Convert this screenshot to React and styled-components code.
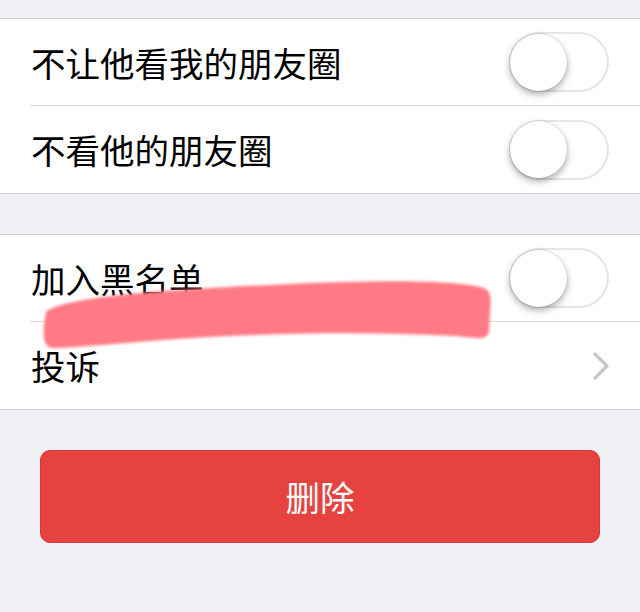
import React from 'react';
import styled, { createGlobalStyle } from 'styled-components';

const Global = createGlobalStyle`
  html, body {
    margin: 0;
    padding: 0;
    background: #efeff4;
  }
  * { box-sizing: border-box; }
`;

const Page = styled.div`
  position: relative;
  width: 640px;
  height: 612px;
  overflow: hidden;
  padding-top: 18px;
  background: #efeff4;
  font-family: 'Noto Sans CJK SC', 'Noto Sans', sans-serif;
`;

const Group = styled.div`
  background: #fff;
  border-top: 1px solid #d2d1d6;
  border-bottom: 1px solid #d2d1d6;
  margin-bottom: ${({ gap }) => gap}px;
`;

const Row = styled.div`
  height: 87px;
  margin-left: 30px;
  padding-right: 31px;
  display: flex;
  align-items: center;
  justify-content: space-between;
  border-bottom: ${({ last }) => (last ? 'none' : '1px solid #dcdbe0')};
  font-size: 34.5px;
  color: #000;
  line-height: 1;
`;

const Label = styled.span`
  padding-left: 1px;
`;

const Switch = styled.div`
  width: 100px;
  height: 60px;
  border-radius: 30px;
  border: 2px solid #e5e5ea;
  background: #fff;
  display: flex;
  align-items: center;
`;

const Knob = styled.div`
  width: 57px;
  height: 57px;
  margin-left: -1px;
  border-radius: 50%;
  background: #fff;
  box-shadow: 0 0 0 0.5px rgba(0, 0, 0, 0.12), 0 3px 6px rgba(0, 0, 0, 0.28),
    0 4px 12px rgba(0, 0, 0, 0.08);
`;

const Chevron = styled.svg`
  width: 18px;
  height: 28px;
  margin-right: -1px;
`;

const ButtonWrap = styled.div`
  padding: 0 40px;
`;

const DeleteButton = styled.button`
  width: 100%;
  height: 93px;
  border: 1px solid #d43a37;
  border-radius: 10px;
  background: #e64340;
  color: #fff;
  font-family: 'Noto Sans CJK SC', 'Noto Sans', sans-serif;
  font-size: 34.5px;
  line-height: 1;
  display: flex;
  align-items: center;
  justify-content: center;
`;

// hand-drawn marker stroke laid over the rows
const Scribble = styled.svg`
  position: absolute;
  left: 0;
  top: 0;
  width: 640px;
  height: 612px;
  pointer-events: none;
`;

const Toggle = () => (
  <Switch>
    <Knob />
  </Switch>
);

export default function App() {
  return (
    <Page>
      <Global />
      <Group gap={40}>
        <Row>
          <Label>不让他看我的朋友圈</Label>
          <Toggle />
        </Row>
        <Row last>
          <Label>不看他的朋友圈</Label>
          <Toggle />
        </Row>
      </Group>
      <Group gap={40}>
        <Row>
          <Label>加入黑名单</Label>
          <Toggle />
        </Row>
        <Row last>
          <Label>投诉</Label>
          <Chevron viewBox="0 0 18 28">
            <path d="M3 2 L15 14 L3 26" fill="none" stroke="#c7c7cc" strokeWidth="3.2" strokeLinecap="round" strokeLinejoin="round" />
          </Chevron>
        </Row>
      </Group>
      <ButtonWrap>
        <DeleteButton>删除</DeleteButton>
      </ButtonWrap>
      <Scribble viewBox="0 0 640 612">
        <defs>
          <filter id="soft" x="-10%" y="-50%" width="120%" height="200%">
            <feGaussianBlur stdDeviation="1.6" />
          </filter>
        </defs>
        <path
          d="M46 312 C 62 298 150 290 290 284 C 380 280 455 280 484 288 C 492 292 491 300 490 312 L 489 332 C 486 341 478 338 455 336 C 360 331 250 333 150 341 C 100 345 70 348 52 348 C 44 346 43 338 44 325 Z"
          fill="#ff7a85"
          filter="url(#soft)"
        />
      </Scribble>
    </Page>
  );
}
